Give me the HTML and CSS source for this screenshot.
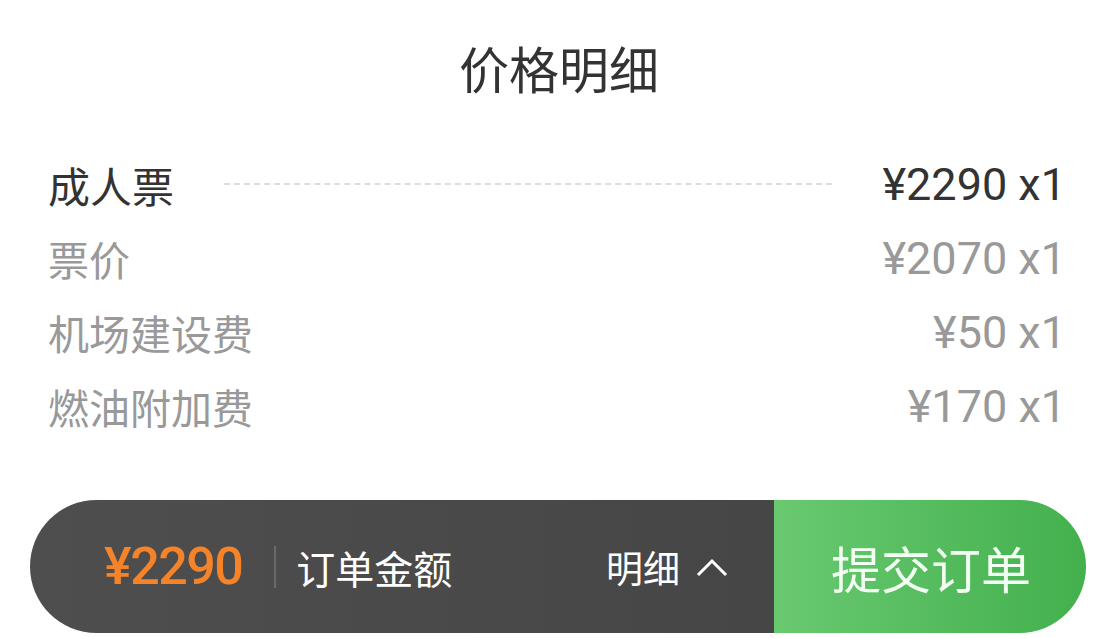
FILE: index.html
```html
<!DOCTYPE html>
<html lang="zh-CN">
<head>
    <meta charset="UTF-8">
    <meta name="viewport" content="width=device-width, initial-scale=1.0">
    <title>价格明细</title>
    <link rel="stylesheet" href="styles.css">
</head>
<body>
    <div class="sheet">
        <h1 class="sheet-title">价格明细</h1>

        <div class="price-list">
            <div class="price-row main">
                <span class="label">成人票</span>
                <span class="dots"></span>
                <span class="amount">¥2290 x1</span>
            </div>
            <div class="price-row">
                <span class="label">票价</span>
                <span class="amount">¥2070 x1</span>
            </div>
            <div class="price-row">
                <span class="label">机场建设费</span>
                <span class="amount">¥50 x1</span>
            </div>
            <div class="price-row">
                <span class="label">燃油附加费</span>
                <span class="amount">¥170 x1</span>
            </div>
        </div>
    </div>

    <div class="order-bar">
        <div class="order-info">
            <span class="total">¥2290</span>
            <span class="sep"></span>
            <span class="total-label">订单金额</span>
            <span class="detail-toggle">
                明细
                <svg width="32" height="20" viewBox="0 0 32 20">
                    <polyline points="2,18 16,4 30,18" fill="none" stroke="#fff" stroke-width="3" />
                </svg>
            </span>
        </div>
        <button class="submit-btn">提交订单</button>
    </div>
</body>
</html>
```

FILE: styles.css
```css
body {
    margin: 0;
    background: #fff;
    font-family: "Noto Sans CJK SC", "Noto Sans", sans-serif;
    color: #333;
}
.sheet {
    padding: 0 50px 0 48px;
}
.sheet-title {
    margin: 0;
    height: 134px;
    display: flex;
    align-items: center;
    justify-content: center;
    padding-left: 4px;
    font-size: 50px;
    font-weight: normal;
    color: #333;
}
.price-list {
    margin-top: 13px;
}
.price-row {
    height: 74px;
    display: flex;
    align-items: center;
    font-size: 41px;
    color: #999;
}
.price-row .amount {
    margin-left: auto;
    font-family: Roboto, "Noto Sans", sans-serif;
    font-size: 45px;
}
.price-row.main {
    color: #333;
}
.price-row.main .label {
    font-size: 42px;
}
.price-row.main .amount {
    margin-left: 0;
}
.dots {
    flex: 1;
    margin: 0 50px 0 50px;
    border-top: 2px dashed #ddd;
}
.order-bar {
    margin: 57px 30px 0;
    height: 133px;
    display: flex;
    border-radius: 67px;
    overflow: hidden;
}
.order-info {
    flex: 1;
    display: flex;
    align-items: center;
    padding: 0 46px 0 74px;
    background: linear-gradient(to right, #4e4e4e, #464646);
    color: #fff;
}
.total {
    font-family: Roboto, sans-serif;
    font-size: 52px;
    font-weight: 500;
    letter-spacing: -1.5px;
    color: #f5832a;
}
.sep {
    width: 2px;
    height: 42px;
    margin: 0 20px 0 32px;
    background: #6a6a6a;
}
.total-label {
    font-size: 39px;
}
.detail-toggle {
    margin-left: auto;
    display: flex;
    align-items: center;
    gap: 16px;
    font-size: 37px;
}
.submit-btn {
    width: 312px;
    border: none;
    padding: 0 0 0 2px;
    background: linear-gradient(to right, #69c971, #43b04d);
    color: #f4fff4;
    font-family: inherit;
    font-size: 50px;
    cursor: pointer;
}
```
